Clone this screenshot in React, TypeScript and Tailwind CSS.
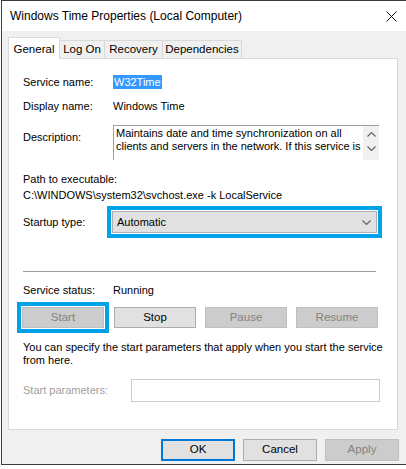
import React from 'react'

const font = { fontFamily: '"Liberation Sans", Arial, sans-serif' }

const Btn = ({ label, disabled, className = '' }: any) => (
  <div
    className={`flex h-[21px] w-[82px] items-center justify-center border text-[11.5px] ${
      disabled
        ? 'border-[#bfbfbf] bg-[#cccccc] text-[#838383]'
        : 'border-[#adadad] bg-[#e1e1e1] text-black'
    } ${className}`}>
    {label}
  </div>
)

const Chevron = ({ up, className = '' }: any) => (
  <svg width="9" height="5" viewBox="0 0 9 5" className={className}>
    <path
      d={up ? 'M0.5 4.5 L4.5 0.5 L8.5 4.5' : 'M0.5 0.5 L4.5 4.5 L8.5 0.5'}
      fill="none"
      stroke="#606060"
      strokeWidth="1.1"
    />
  </svg>
)

export default function App() {
  return (
    <div className="h-[469px] w-[406px] overflow-hidden bg-white" style={font}>
      <div className="ml-[1px] flex h-[465px] w-[405px] flex-col border-b border-l border-t border-[#3c3c3c]">
        {/* title bar */}
        <div className="flex h-[30px] items-center justify-between bg-white pl-[8px] pr-[9px] text-[12px] text-black">
          <span>Windows Time Properties (Local Computer)</span>
          <svg width="11" height="11" viewBox="0 0 11 11">
            <path d="M0.5 0.5 L10.5 10.5 M10.5 0.5 L0.5 10.5" stroke="#111" strokeWidth="1" />
          </svg>
        </div>

        <div className="flex flex-1 flex-col bg-[#f0f0f0] pl-[6px] pr-[7px] pt-[6px] text-[11px] text-black">
          {/* tabs */}
          <div className="relative z-10 flex h-[21px] items-end text-[11.5px]">
            <div className="-mb-px flex h-[22px] w-[52px] items-start justify-center border border-b-0 border-[#d9d9d9] bg-white pt-[3px]">
              General
            </div>
            <div className="flex h-[18px] w-[45px] items-center justify-center border border-b-0 border-l-0 border-[#d9d9d9]">
              Log On
            </div>
            <div className="flex h-[18px] w-[58px] items-center justify-center border border-b-0 border-l-0 border-[#d9d9d9]">
              Recovery
            </div>
            <div className="flex h-[18px] w-[79px] items-center justify-center border border-b-0 border-l-0 border-[#d9d9d9]">
              Dependencies
            </div>
          </div>

          {/* panel */}
          <div className="flex h-[372px] w-[390px] flex-col border border-[#d9d9d9] bg-white">
            <div className="mt-[15px] flex h-[16px] items-center">
              <span className="w-[104px] pl-[14px]">Service name:</span>
              <span className="bg-[#3399ff] px-[1px] leading-[14px] text-white">W32Time</span>
            </div>
            <div className="mt-[8px] flex h-[16px] items-center">
              <span className="w-[104px] pl-[14px]">Display name:</span>
              <span>Windows Time</span>
            </div>

            <div className="mt-[11px] flex">
              <span className="w-[104px] pl-[14px] pt-[4px]">Description:</span>
              <div className="flex h-[35px] w-[266px] border-l border-t border-[#a0a0a0]">
                <div className="flex-1 overflow-hidden pl-[2px] pt-[1px] leading-[13px]">
                  Maintains date and time synchronization on all clients and servers in the network. If this service is
                </div>
                <div className="flex w-[16px] flex-col items-center gap-[9px] bg-[#f0f0f0] pt-[6px]">
                  <Chevron up />
                  <Chevron />
                </div>
              </div>
            </div>

            <div className="mt-[11px] pl-[14px] leading-[16px]">Path to executable:</div>
            <div className="pl-[14px] leading-[16px]">C:\WINDOWS\system32\svchost.exe -k LocalService</div>

            <div className="mt-[3px] flex items-center">
              <span className="w-[98px] pl-[14px]">Startup type:</span>
              <div className="border-4 border-[#00a2e8] p-[1px]">
                <div className="flex h-[22px] w-[265px] items-center justify-between border border-[#adadad] bg-[#e1e1e1] pl-[4px] pr-[5px]">
                  <span>Automatic</span>
                  <Chevron />
                </div>
              </div>
            </div>

            <div className="ml-[14px] mt-[33px] h-px w-[353px] bg-[#a0a0a0]" />

            <div className="mt-[10px] flex h-[16px] items-center">
              <span className="w-[104px] pl-[14px]">Service status:</span>
              <span>Running</span>
            </div>

            <div className="ml-[8px] mt-[4px] flex items-center">
              <div className="border-4 border-[#00a2e8] p-[1px]">
                <Btn label="Start" disabled />
              </div>
              <Btn label="Stop" className="ml-[5px]" />
              <Btn label="Pause" disabled className="ml-[9px]" />
              <Btn label="Resume" disabled className="ml-[9px]" />
            </div>

            <div className="mt-[8px] pl-[14px] pr-[10px] leading-[13px]">
              You can specify the start parameters that apply when you start the service from here.
            </div>

            <div className="mt-[12px] flex items-center">
              <span className="w-[122px] pl-[14px] text-[#a0a0a0]">Start parameters:</span>
              <div className="h-[23px] w-[249px] border border-[#cccccc] bg-white" />
            </div>
          </div>

          {/* dialog buttons */}
          <div className="mt-[9px] flex justify-end gap-[8px] text-[11.5px]">
            <div className="flex h-[22px] w-[74px] items-center justify-center border-2 border-[#0078d7] bg-[#e1e1e1]">
              OK
            </div>
            <div className="flex h-[22px] w-[74px] items-center justify-center border border-[#adadad] bg-[#e1e1e1]">
              Cancel
            </div>
            <div className="flex h-[22px] w-[74px] items-center justify-center border border-[#bfbfbf] bg-[#cccccc] text-[#838383]">
              Apply
            </div>
          </div>
        </div>
      </div>
    </div>
  )
}
